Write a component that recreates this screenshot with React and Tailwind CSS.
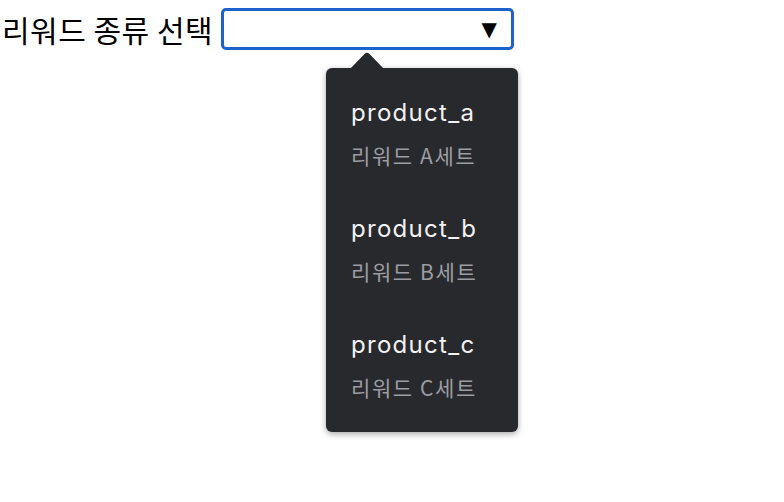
import React from "react";

const options = [
  { value: "product_a", label: "리워드 A세트" },
  { value: "product_b", label: "리워드 B세트" },
  { value: "product_c", label: "리워드 C세트" },
];

const font = "font-['Inter','Noto_Sans_CJK_KR',sans-serif]";

export default function App() {
  return (
    <div className={`relative w-[784px] h-[502px] bg-white ${font}`}>
      {/* ── Label + input ── */}
      <div className="flex items-center gap-[9px] pl-[2px] pt-[8px]">
        <span className="w-[210px] whitespace-nowrap text-[30px] leading-[42px] tracking-[0.5px] text-black font-['Noto_Sans_CJK_KR',sans-serif]">
          리워드 종류 선택
        </span>
        <div className="flex items-center justify-end w-[293px] h-[42px] border-[3px] border-[#1d62cc] rounded-[5px] pr-[14px]">
          <span className="text-[20px] leading-none text-black font-['DejaVu_Sans',sans-serif]">▼</span>
        </div>
      </div>

      {/* ── Datalist popup ── */}
      <div className="absolute left-[326px] top-[52px]">
        <svg className="absolute left-[24px] top-0" width="34" height="17" viewBox="0 0 34 17">
          <path d="M0 17 L14.5 2 Q17 -0.5 19.5 2 L34 17 Z" fill="#28292d" />
        </svg>
        <div className="mt-[16px] w-[192px] rounded-[6px] bg-[#28292d] py-[8px] shadow-[0_2px_6px_rgba(0,0,0,0.35)]">
          {options.map((o) => (
            <div key={o.value} className="h-[116px] pl-[25px] pt-[24px]">
              <div className="text-[24px] leading-[26px] tracking-[1.3px] text-[#f2f2f2]">{o.value}</div>
              <div className="mt-[17px] text-[21px] leading-[24px] tracking-[1.6px] text-[#9c9da1] font-['Noto_Sans_CJK_KR',sans-serif]">{o.label}</div>
            </div>
          ))}
        </div>
      </div>
    </div>
  );
}
